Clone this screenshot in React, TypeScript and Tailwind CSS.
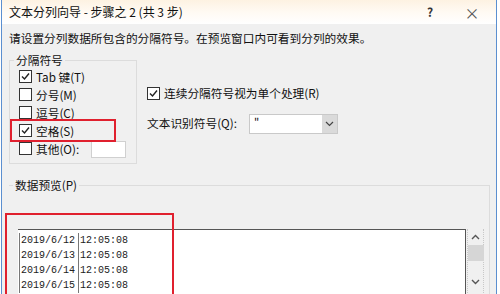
import React from "react"

const cjk = { fontFamily: '"Noto Sans CJK SC", "Noto Sans", sans-serif' }
const mono = { fontFamily: '"Liberation Mono", "DejaVu Sans Mono", monospace' }

function Check({ checked }: { checked?: boolean }) {
  return (
    <span className="w-[13px] h-[13px] border border-[#333] bg-white flex items-center justify-center shrink-0">
      {checked && (
        <svg width="11" height="11" viewBox="0 0 11 11">
          <path d="M2 5.5 L4.5 8 L9 2.5" stroke="#222" strokeWidth="1.4" fill="none" />
        </svg>
      )}
    </span>
  )
}

const options = [
  { label: "Tab 键(T)", checked: true },
  { label: "分号(M)" },
  { label: "逗号(C)" },
  { label: "空格(S)", checked: true },
  { label: "其他(O):" },
]

const rows = ["2019/6/12", "2019/6/13", "2019/6/14", "2019/6/15"]

export default function App() {
  return (
    <div className="w-[500px] h-[294px] bg-white relative overflow-hidden" style={cjk}>
      <div className="ml-[1px] w-[496px] h-[294px] border-x border-[#5b8fd0] bg-[#f0f0f0] flex flex-col">
        {/* Title bar */}
        <div className="h-[24px] shrink-0 bg-gradient-to-b from-[#fdf2e2] via-[#fffaf3] to-white flex items-center pl-[7px] text-[12px] text-[#111]">
          <span className="flex-1">文本分列向导 - 步骤之 2 (共 3 步)</span>
          <span className="w-[30px] text-center font-bold text-[12px] text-[#333]">?</span>
          <span className="w-[48px] ml-[3px] text-center text-[15px] text-[#555] leading-none">×</span>
        </div>

        {/* Body */}
        <div className="px-[7px] pt-[6px] text-[11.7px] text-[#111]">
          <div className="h-[16px] leading-[16px]">请设置分列数据所包含的分隔符号。在预览窗口内可看到分列的效果。</div>

          <div className="flex mt-[14px]">
            {/* Delimiters group */}
            <div className="w-[128px] h-[104px] border border-[#dcdcdc] relative pt-[9px] pl-[9px]">
              <span className="absolute -top-[9px] left-[4px] bg-[#f0f0f0] px-[2px] leading-[16px]">分隔符号</span>
              <div className="flex flex-col gap-[5px]">
                {options.map((o) => (
                  <div key={o.label} className="h-[13px] flex items-center gap-[4px]">
                    <Check checked={o.checked} />
                    <span className="leading-[13px]">{o.label}</span>
                    {o.label.startsWith("其他") && (
                      <span className="ml-[8px] mt-[2px] w-[35px] h-[17px] bg-white border border-[#d0d0d0]" />
                    )}
                  </div>
                ))}
              </div>
            </div>

            {/* Right options */}
            <div className="ml-[10px] pt-[26px] flex flex-col">
              <div className="h-[14px] flex items-center gap-[4px]">
                <Check checked />
                <span>连续分隔符号视为单个处理(R)</span>
              </div>
              <div className="mt-[14px] flex items-start">
                <span className="w-[102px] leading-[16px] mt-[1px]">文本识别符号(Q):</span>
                <span className="w-[89px] h-[20px] bg-white border border-[#c9c9c9] flex">
                  <span className="flex-1 pl-[4px] leading-[12px] text-[11px]">"</span>
                  <span className="w-[15px] bg-[#dadada] flex items-center justify-center">
                    <svg width="9" height="6" viewBox="0 0 9 6">
                      <path d="M1 1 L4.5 4.5 L8 1" stroke="#444" strokeWidth="1.2" fill="none" />
                    </svg>
                  </span>
                </span>
              </div>
            </div>
          </div>

          {/* Preview group */}
          <div className="mt-[21px] w-[481px] h-[120px] border-t border-r border-[#dcdcdc] relative">
            <span className="absolute -top-[9px] left-[4px] bg-[#f0f0f0] px-[2px] leading-[16px]">数据预览(P)</span>
            <div className="flex mt-[43px] ml-[9px]">
              <div className="w-[448px] h-[80px] bg-white border-t border-r border-[#555] pl-[1px] text-[10px] text-[#222]" style={mono}>
                <div className="flex flex-col pt-[3px]">
                  {rows.map((d) => (
                    <div key={d} className="h-[15px] flex items-center">
                      <span className="w-[60px] h-[15px] border-x border-[#777] leading-[15px] pl-[1px]">{d}</span>
                      <span className="pl-[1px] leading-[15px]">12:05:08</span>
                    </div>
                  ))}
                </div>
              </div>
              <div className="w-[17px] h-[80px] ml-[1px] border-x border-dotted border-[#c8c8c8] flex flex-col items-center">
                <svg className="mt-[5px]" width="9" height="6" viewBox="0 0 9 6">
                  <path d="M1 5 L4.5 1.5 L8 5" stroke="#555" strokeWidth="1.4" fill="none" />
                </svg>
                <span className="mt-[5px] w-[16px] h-[16px] bg-[#d6d6d6]" />
                <svg className="mt-[18px]" width="9" height="6" viewBox="0 0 9 6">
                  <path d="M1 1 L4.5 4.5 L8 1" stroke="#555" strokeWidth="1.4" fill="none" />
                </svg>
              </div>
            </div>
          </div>
        </div>
      </div>

      {/* Red annotation boxes */}
      <div className="absolute left-[10px] top-[119px] w-[106px] h-[23px] border-2 border-[#e0202e]" />
      <div className="absolute left-[5px] top-[213px] w-[169px] h-[90px] border-2 border-[#e0202e]" />
    </div>
  )
}
